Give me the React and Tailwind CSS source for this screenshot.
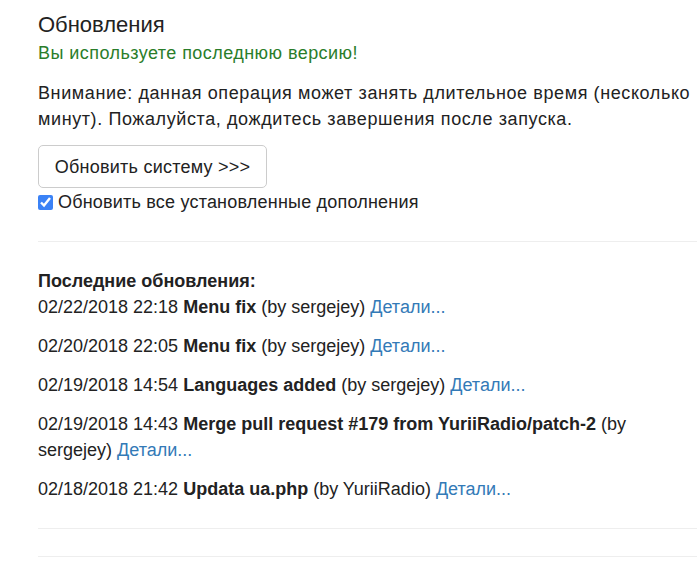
const updates = [
  { date: '02/22/2018 22:18', title: 'Menu fix', author: 'sergejey' },
  { date: '02/20/2018 22:05', title: 'Menu fix', author: 'sergejey' },
  { date: '02/19/2018 14:54', title: 'Languages added', author: 'sergejey' },
  { date: '02/19/2018 14:43', title: 'Merge pull request #179 from YuriiRadio/patch-2', author: 'sergejey' },
  { date: '02/18/2018 21:42', title: 'Updata ua.php', author: 'YuriiRadio' },
];

export default function App() {
  return (
    <div className="min-h-screen bg-white pl-[38px] pr-[3px] text-[18px] leading-[26px] text-[#222] [font-family:'Liberation_Sans',Arial,sans-serif]">
      <h4 className="pt-[13px] text-[22px] leading-[24px]">Обновления</h4>
      <p className="mt-[3px] tracking-[0.44px] text-[#2a7d2a]">Вы используете последнюю версию!</p>

      <p className="mt-[14px] tracking-[0.6px]">
        Внимание: данная операция может занять длительное время (несколько минут). Пожалуйста, дождитесь
        завершения после запуска.
      </p>

      <button className="mt-[13px] h-[43px] w-[229px] rounded-[5px] border border-[#ccc] bg-white text-[18px] tracking-[0.25px] text-[#222]">
        Обновить систему &gt;&gt;&gt;
      </button>

      <label className="mt-[1px] flex items-center gap-[5px] tracking-[0.2px]">
        <input type="checkbox" defaultChecked className="h-[15px] w-[15px] accent-[#3b82f6]" />
        Обновить все установленные дополнения
      </label>

      <hr className="mt-[26px] border-t border-[#eee]" />

      <div className="mt-[26px] font-bold">Последние обновления:</div>
      {updates.map((u, i) => (
        <p key={i} className="mb-[13px]">
          {u.date} <b>{u.title}</b> (by {u.author}){' '}
          <a href="#" className="text-[#337ab7]">Детали...</a>
        </p>
      ))}

      <hr className="mt-[26px] border-t border-[#eee]" />
      <hr className="mt-[27px] border-t border-[#eee]" />
    </div>
  );
}
